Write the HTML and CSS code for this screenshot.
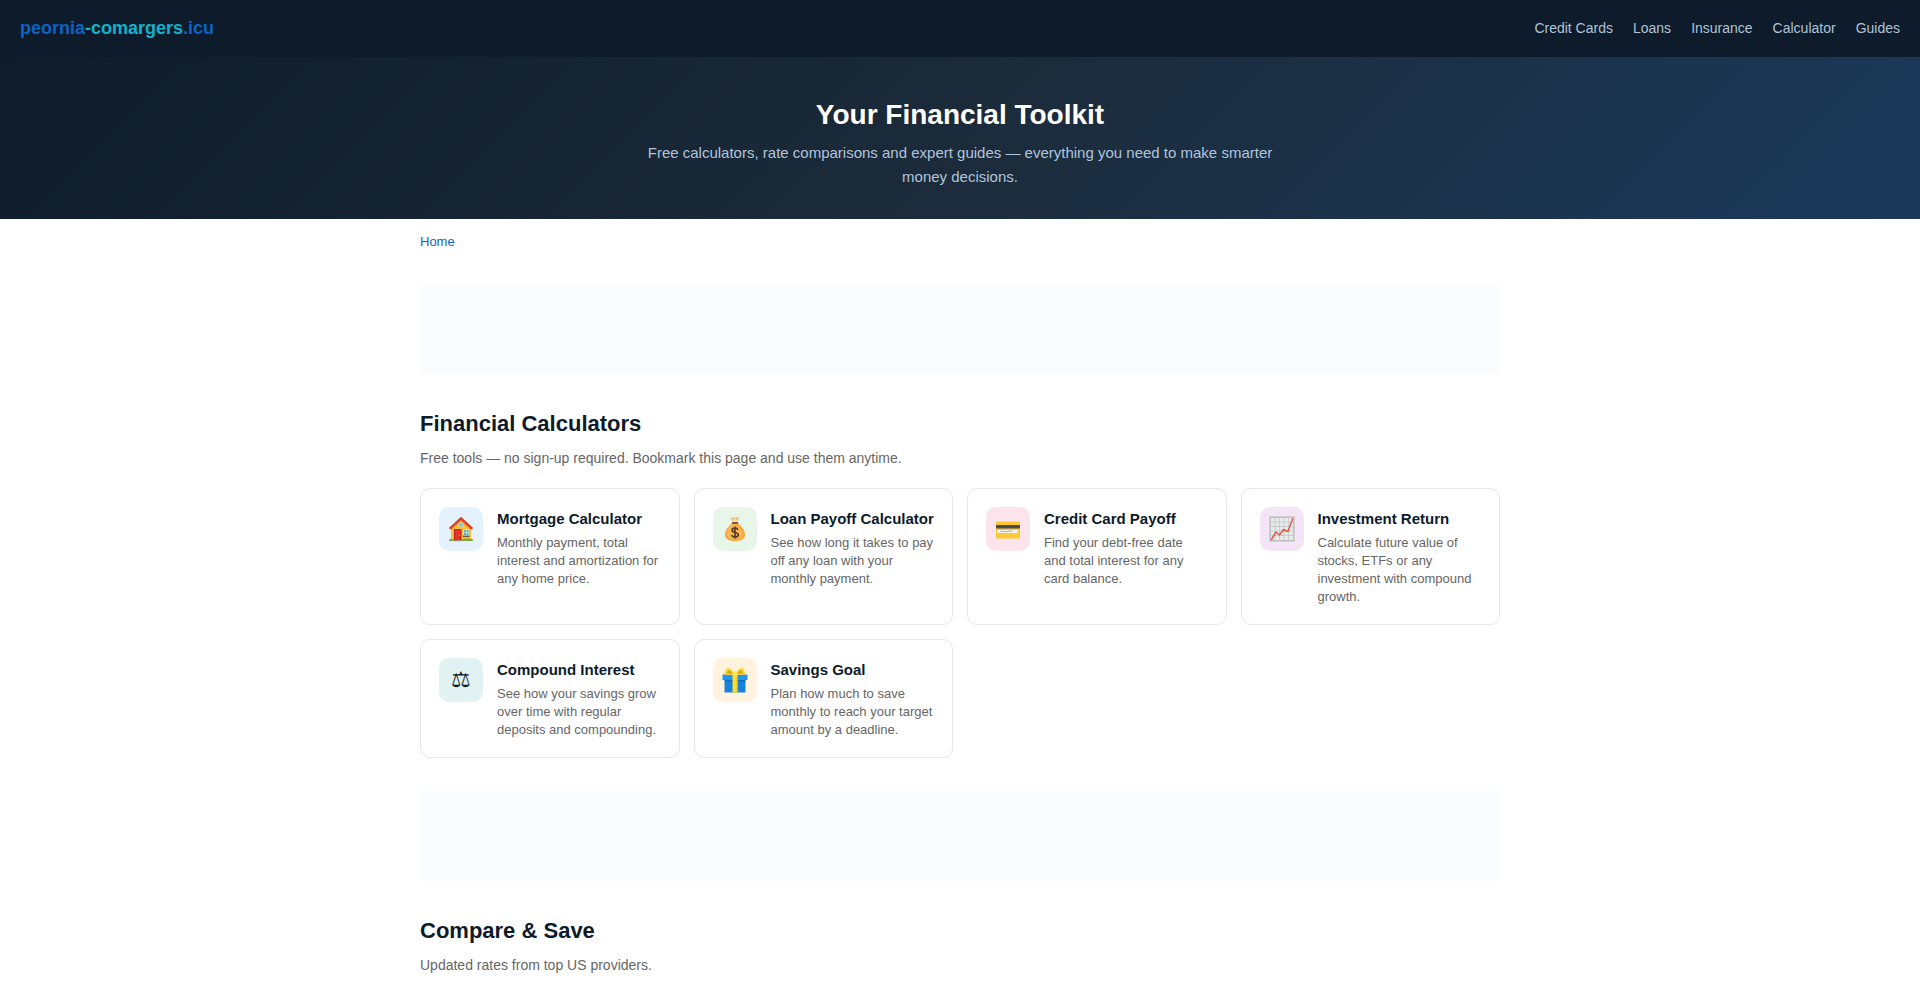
FILE: index.html
```html
<!DOCTYPE html>
<html lang="en">
<head>
<meta charset="utf-8">
<title>Your Financial Toolkit</title>
<link rel="stylesheet" href="styles.css">
</head>
<body>
<header class="topbar">
  <a class="logo" href="#">peornia<span class="logo-accent">-comargers</span>.icu</a>
  <nav class="nav">
    <a href="#">Credit Cards</a>
    <a href="#">Loans</a>
    <a href="#">Insurance</a>
    <a href="#">Calculator</a>
    <a href="#">Guides</a>
  </nav>
</header>
<section class="hero">
  <h1>Your Financial Toolkit</h1>
  <p>Free calculators, rate comparisons and expert guides — everything you need to make smarter money decisions.</p>
</section>
<main class="wrap">
  <nav class="crumbs"><a href="#">Home</a></nav>
  <div class="ad"></div>
  <h2>Financial Calculators</h2>
  <p class="sub">Free tools — no sign-up required. Bookmark this page and use them anytime.</p>
  <div class="grid">
    <a class="card" href="#">
      <span class="icon blue"><svg viewBox="0 0 26 26" aria-hidden="true">
        <path d="M3 12 13 3l10 9v12H3z" fill="#fcc02e"/>
        <path d="M3 14.500V12l10-9 10 9v2.500L13 5.500z" fill="#e59a1d"/>
        <path d="M13 .8 .8 12l1.500 1.500L13 4l10.700 9.500 1.500-1.500z" fill="#dd3b2f"/>
        <circle cx="13" cy="8.700" r="2.300" fill="#7fc4e8" stroke="#f4e2b0" stroke-width=".6"/>
        <path d="M6 13h7.500v11.500H6z" fill="#b71c1c"/>
        <path d="M7 14h5.500v10.500H7z" fill="#e0352b"/>
        <circle cx="11.500" cy="19" r=".6" fill="#ffca28"/>
        <path d="M15.500 13.500h5.500v6.500h-5.500z" fill="#fff3d0"/>
        <path d="M16 14h2v2.500h-2zM18.600 14h2v2.500h-2zM16 17h2v2h-2zM18.600 17h2v2h-2z" fill="#4fb3e0"/>
        <path d="M15 19.500h6.500v1.500H15z" fill="#6d5a48"/>
        <path d="M1 25c0-2 2.500-3 4-1.500h1V25zM14 25v-1.500c3-1.200 8-1.200 11 .2V25z" fill="#7aa83c"/>
        <path d="M5.500 24h8.500v1.200H5.500z" fill="#a58b72"/>
      </svg></span>
      <span class="body"><h3>Mortgage Calculator</h3><p>Monthly payment, total interest and amortization for any home price.</p></span>
    </a>
    <a class="card" href="#">
      <span class="icon green"><svg viewBox="0 0 26 26" aria-hidden="true">
        <path d="M10.500 6.500 8.500 1.500c1.500-.8 2.500.4 4 0s2.800-.9 4.500-.2L15.500 6.500z" fill="#f2c184"/>
        <path d="M10.500 6.500 9 2.500l2.500 2L13 2l1.500 2.500 2-2-1 4z" fill="#fbdcae"/>
        <path d="M10.500 6.500h5c1.500 2.500 7.500 6 7.500 12 0 4.500-3.500 6.500-10 6.500S3 23 3 18.500c0-6 6-9.500 7.500-12z" fill="#f8a83c"/>
        <path d="M10 8.500c-3 3-5 5.500-5 9s2.500 5.500 7 5.500 8-1.500 8-5-2.500-6.500-5.500-9z" fill="#fcb957"/>
        <path d="M10 6.200h6v1.500h-6z" fill="#66402f"/>
        <path d="M13 10.500v12M16 13.800c-.5-1.200-1.600-1.700-3-1.700-1.800 0-3 .9-3 2.200 0 3.200 6.300 1.200 6.300 4.500 0 1.400-1.400 2.300-3.200 2.300-1.700 0-2.900-.7-3.400-2.100" fill="none" stroke="#5f3b24" stroke-width="1.700"/>
      </svg></span>
      <span class="body"><h3>Loan Payoff Calculator</h3><p>See how long it takes to pay off any loan with your monthly payment.</p></span>
    </a>
    <a class="card" href="#">
      <span class="icon pink"><svg viewBox="0 0 26 26" aria-hidden="true">
        <rect x="1" y="5.500" width="24" height="17" rx="1.500" fill="#fdc830"/>
        <path d="M1 9h24v3.500H1z" fill="#4b4a45"/>
        <path d="M2.500 14h20v3h-20z" fill="#fff"/>
        <path d="m5 16.300 1.500-1.500.5 1.400 1.500-1 1 .8 1.500-1.200.5 1.200 2-1 .6.800 1.600-1.200.8 1 1.500-.9" fill="none" stroke="#8b8378" stroke-width=".7"/>
      </svg></span>
      <span class="body"><h3>Credit Card Payoff</h3><p>Find your debt-free date and total interest for any card balance.</p></span>
    </a>
    <a class="card" href="#">
      <span class="icon purple"><svg viewBox="0 0 26 26" aria-hidden="true">
        <rect x=".5" y=".5" width="25" height="25" fill="#b5b5b5"/>
        <rect x="1.500" y="1.500" width="23" height="23" fill="#c9cccd"/>
        <path d="M2 2h3.500v3.500H2zM6.500 2H10v3.500H6.500zM11 2h3.500v3.500H11zM15.500 2H19v3.500h-3.500zM20 2h4v3.500h-4zM2 6.500h3.500V10H2zM6.500 6.500H10V10H6.500zM11 6.500h3.500V10H11zM15.500 6.500H19V10h-3.500zM20 6.500h4V10h-4zM2 11h3.500v3.500H2zM6.500 11H10v3.500H6.500zM11 11h3.500v3.500H11zM15.500 11H19v3.500h-3.500zM20 11h4v3.500h-4zM2 15.500h3.500V19H2zM6.500 15.500H10V19H6.500zM11 15.500h3.500V19H11zM15.500 15.500H19V19h-3.500zM20 15.500h4V19h-4zM2 20h3.500v4H2zM6.500 20H10v4H6.500zM11 20h3.500v4H11zM15.500 20H19v4h-3.500zM20 20h4v4h-4z" fill="#e9ebeb"/>
        <path d="m2.500 23.500 4.500-7.500 3.500 3 4-5.500 4.500 2L23.500 3" fill="none" stroke="#df5a4b" stroke-width="1.500" stroke-linejoin="round" stroke-linecap="round"/>
      </svg></span>
      <span class="body"><h3>Investment Return</h3><p>Calculate future value of stocks, ETFs or any investment with compound growth.</p></span>
    </a>
    <a class="card" href="#">
      <span class="icon teal">⚖</span>
      <span class="body"><h3>Compound Interest</h3><p>See how your savings grow over time with regular deposits and compounding.</p></span>
    </a>
    <a class="card" href="#">
      <span class="icon orange"><svg viewBox="0 0 26 26" aria-hidden="true">
        <path d="M2.500 12h21v13.500h-21z" fill="#1681d8"/>
        <path d="M.5 7.500h25V13H.5z" fill="#2196e8"/>
        <path d="M2.500 13h21v1.200h-21z" fill="#0f68b8"/>
        <path d="M10.500 7.500h5v18h-5z" fill="#fddb2e"/>
        <path d="M14.500 7.500h1v18h-1z" fill="#e9bd22"/>
        <path d="M12.500 7.500C9 8 5.500 8 2 7.300 3 5 4 2.500 5.500.8 8.500 1.500 11.500 4 12.500 7.500z" fill="#fdd62c"/>
        <path d="M13.500 7.500c3.500.5 7 .5 10.500-.2-1-2.300-2-4.800-3.500-6.500-3 .7-6 3.200-7 6.700z" fill="#fdd62c"/>
        <path d="M4.500 6.500c1-2 2-3 3-3.300 1.500.9 3 2.300 3.500 3.600zM21.500 6.500c-1-2-2-3-3-3.300-1.500.9-3 2.300-3.500 3.600z" fill="#d6a91c"/>
        <rect x="10.500" y="4.500" width="5" height="4" rx="1.300" fill="#ffe454"/>
      </svg></span>
      <span class="body"><h3>Savings Goal</h3><p>Plan how much to save monthly to reach your target amount by a deadline.</p></span>
    </a>
  </div>
  <div class="ad"></div>
  <h2>Compare &amp; Save</h2>
  <p class="sub">Updated rates from top US providers.</p>
</main>
</body>
</html>
```
FILE: styles.css
```css
* { box-sizing: border-box; margin: 0; padding: 0; }
html { overflow: hidden; }
body { font-family: "Liberation Sans", Arial, sans-serif; color: #0d1b2a; background: #fff; line-height: 1.6; }
a { color: inherit; text-decoration: none; }
.topbar { display: flex; align-items: center; justify-content: space-between; padding: 14px 20px; background: #0d1b2a; }
.logo { font-size: 18px; line-height: 29px; font-weight: 700; color: #0b63c5; }
.logo-accent { color: #14b1cc; }
.nav { display: flex; gap: 20px; font-size: 14px; color: #b0c4d8; }
.hero { padding: 36px 20px 30px; text-align: center; background: linear-gradient(135deg, #0d1b2a 0%, #1c2b3a 50%, #1a3a5c 100%); }
.hero h1 { font-size: 28px; line-height: 44px; color: #fff; margin-bottom: 4px; }
.hero p { max-width: 640px; margin: 0 auto; font-size: 15px; line-height: 24px; color: #b0c4de; }
.wrap { width: 100%; max-width: 1120px; padding: 0 20px; margin: 0 auto; }
.crumbs { padding: 12px 0 8px; margin-bottom: 24px; font-size: 13px; line-height: 21px; color: #0b66c3; }
.ad { height: 90px; margin-bottom: 32px; border-radius: 8px; background: #fafbfd; }
h2 { font-size: 22px; line-height: 35px; margin-bottom: 6px; }
.sub { font-size: 14px; line-height: 23px; color: #666; margin-bottom: 18px; }
.grid { display: grid; grid-template-columns: repeat(auto-fill, minmax(240px, 1fr)); gap: 14px; margin-bottom: 33px; }
.card { display: flex; gap: 14px; align-items: flex-start; padding: 18px; border: 1px solid #e5e7ea; border-radius: 10px; }
.icon { display: flex; flex: none; align-items: center; justify-content: center; width: 44px; height: 44px; border-radius: 10px; font-size: 22px; }
.icon svg { width: 26px; height: 26px; }
.body { display: block; }
.card h3 { font-size: 15px; line-height: 24px; margin-bottom: 3px; }
.card p { font-size: 13px; line-height: 18px; color: #666; }
.blue { background: #e3f2fd; }
.green { background: #e8f5e9; }
.pink { background: #fce4ec; }
.purple { background: #f3e5f5; }
.teal { background: #e0f2f1; }
.orange { background: #fff3e0; }
```
